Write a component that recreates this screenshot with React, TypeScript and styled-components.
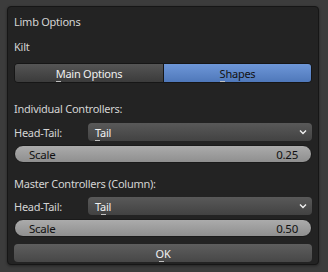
import React from 'react';
import styled, { createGlobalStyle } from 'styled-components';

const GlobalStyle = createGlobalStyle`
  html, body {
    margin: 0;
    padding: 0;
    background: #3c3c3c;
  }
  body {
    font-family: 'Noto Sans', 'Open Sans', 'DejaVu Sans', sans-serif;
    font-size: 11px;
    letter-spacing: -0.25px;
  }
`;

const Page = styled.div`
  width: 328px;
  height: 272px;
  padding: 6px 9px 0 7px;
  box-sizing: border-box;
`;

const Panel = styled.div`
  height: 259px;
  box-sizing: border-box;
  background: #232323;
  border: 1px solid #161616;
  border-radius: 4px;
  padding: 5px 6px 0 6px;
  display: flex;
  flex-direction: column;
  box-shadow: 0 1px 3px rgba(0, 0, 0, 0.4);
`;

const Label = styled.div<{ $mt?: number }>`
  height: 20px;
  line-height: 20px;
  margin-top: ${(p) => p.$mt ?? 0}px;
  color: #d4d4d4;
  white-space: nowrap;
`;

const Tabs = styled.div`
  margin-top: 6px;
  height: 18px;
  display: grid;
  grid-template-columns: 148px 1fr;
  border: 1px solid #161616;
  border-radius: 4px;
  overflow: hidden;
`;

const Tab = styled.div<{ $active?: boolean }>`
  display: flex;
  align-items: center;
  justify-content: center;
  color: ${(p) => (p.$active ? '#111' : '#f0f0f0')};
  background: ${(p) =>
    p.$active
      ? 'linear-gradient(#6e97d8, #4f78ba)'
      : 'linear-gradient(#555, #3b3b3b)'};
  & + & {
    border-left: 1px solid #161616;
  }
`;

const Mn = styled.span<{ $dx?: number }>`
  position: relative;
  &::after {
    content: '';
    position: absolute;
    left: ${(p) => p.$dx ?? 0}px;
    bottom: -1px;
    width: 5px;
    height: 1px;
    background: #c0c0c0;
  }
`;

const Row = styled.div<{ $mt?: number }>`
  margin-top: ${(p) => p.$mt ?? 0}px;
  height: 18px;
  display: grid;
  grid-template-columns: 74px 1fr;
  align-items: center;
`;

const RowLabel = styled.span`
  color: #d4d4d4;
`;

const Select = styled.div`
  height: 18px;
  box-sizing: border-box;
  border-radius: 4px;
  background: linear-gradient(#595959, #424242);
  color: #f2f2f2;
  display: flex;
  align-items: center;
  justify-content: space-between;
  padding: 0 5px 0 7px;
`;

const Slider = styled.div<{ $mt?: number }>`
  margin-top: ${(p) => p.$mt ?? 0}px;
  height: 18px;
  box-sizing: border-box;
  border-radius: 9px;
  border: 1px solid #1a1a1a;
  background: linear-gradient(#ababab, #8f8f8f);
  color: #111;
  font-size: 11.5px;
  display: flex;
  align-items: center;
  justify-content: space-between;
  padding: 0 13px 0 14px;
`;

const Button = styled.div`
  margin-top: 7px;
  height: 18px;
  border-radius: 4px;
  background: linear-gradient(#5e5e5e, #474747);
  color: #f2f2f2;
  display: flex;
  align-items: center;
  justify-content: center;
`;

const Chevron = () => (
  <svg width="8" height="6" viewBox="0 0 8 6">
    <path d="M1 1.5 L4 4.5 L7 1.5" fill="none" stroke="#f0f0f0" strokeWidth="1.4" />
  </svg>
);

function HeadTail({ mt, dx }: { mt: number; dx: number }) {
  return (
    <Row $mt={mt}>
      <RowLabel>Head-Tail:</RowLabel>
      <Select>
        <span>
          <Mn $dx={dx}>Tail</Mn>
        </span>
        <Chevron />
      </Select>
    </Row>
  );
}

export default function App() {
  return (
    <>
      <GlobalStyle />
      <Page>
        <Panel>
          <Label>Limb Options</Label>
          <Label $mt={5}>Kilt</Label>
          <Tabs>
            <Tab>
              <span>
                <Mn>M</Mn>ain Options
              </span>
            </Tab>
            <Tab $active>
              <span>
                <Mn>S</Mn>hapes
              </span>
            </Tab>
          </Tabs>
          <Label $mt={16}>Individual Controllers:</Label>
          <HeadTail mt={4} dx={0} />
          <Slider $mt={4}>
            <span>Scale</span>
            <span>0.25</span>
          </Slider>
          <Label $mt={11}>Master Controllers (Column):</Label>
          <HeadTail mt={3} dx={6} />
          <Slider $mt={4}>
            <span>Scale</span>
            <span>0.50</span>
          </Slider>
          <Button>
            <Mn $dx={3}>OK</Mn>
          </Button>
        </Panel>
      </Page>
    </>
  );
}
